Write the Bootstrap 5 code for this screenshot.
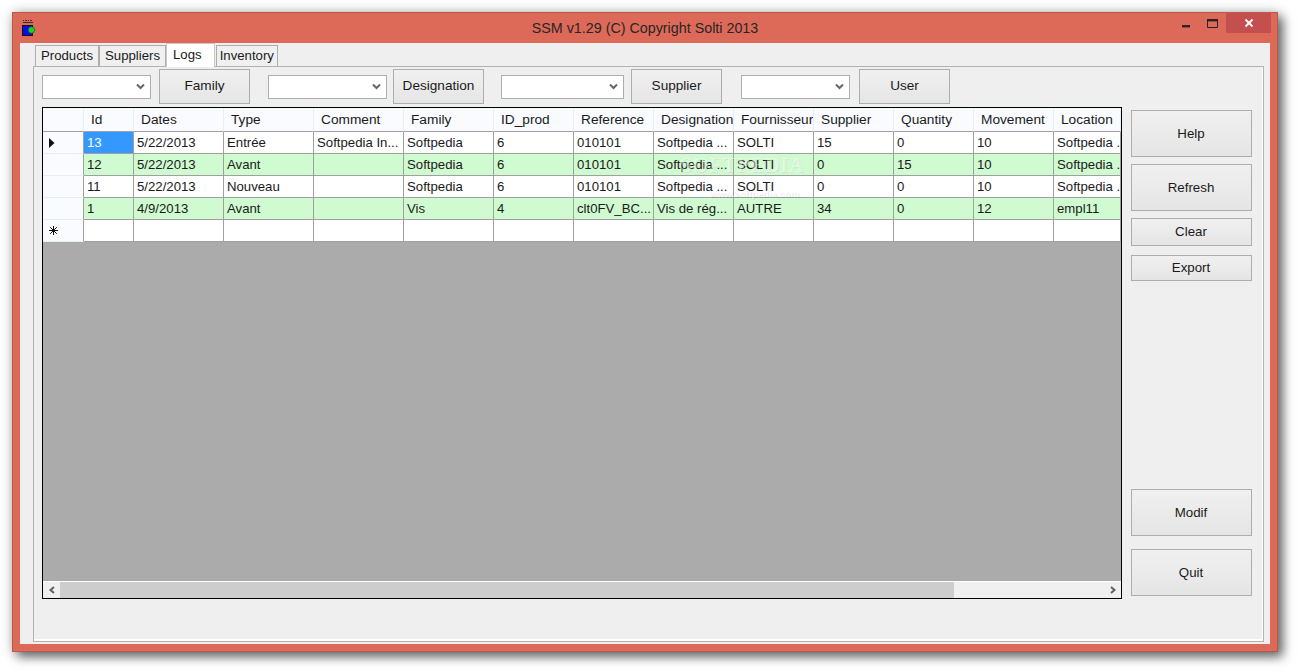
<!DOCTYPE html>
<html lang="en">
<head>
    <meta charset="UTF-8">
    <meta name="viewport" content="width=device-width, initial-scale=1.0">
    <title>SSM v1.29</title>
    <link href="https://cdn.jsdelivr.net/npm/bootstrap@5.3.0/dist/css/bootstrap.min.css" rel="stylesheet">
    <style>
        html, body { height: 100%; overflow: hidden; }
        body { background: #fff; color: #1a1a1a; font-family: "Liberation Sans", Arial, sans-serif; font-size: 13px; }
        .app-window {
            position: relative; width: 1266px; height: 640px; margin: 12px;
            background: #dd6a58; border: 1px solid #b85a4b;
            box-shadow: 5px 5px 10px rgba(0,0,0,.55), 0 0 12px rgba(0,0,0,.22);
        }
        .title-bar { height: 30px; padding-left: 8px; }
        .title-text { font-size: 14.3px; color: #262626; line-height: 30px; padding-right: 23px; }
        .win-controls { position: absolute; top: 0; right: 6px; height: 20px; }
        .win-btn { width: 26px; height: 20px; }
        .win-close { width: 45px; background: #c44f4f; margin-left: 1px; }
        .client-area { height: 601px; margin: 0 7px; background: #efefef; padding: 0 6px 2px 13px; }

        .nav-tabs.ssm-tabs { height: 23px; padding-left: 2px; border: 0; gap: 0; flex-wrap: nowrap; }
        .ssm-tabs .nav-link {
            height: 21px; margin: 2px 0 0; padding: 0 5px; line-height: 20px; font-size: 13.2px; color: #1a1a1a;
            background: #f0f0f0; border: 1px solid #adadad; border-bottom: 0; border-radius: 0;
        }
        .ssm-tabs .nav-link.active { height: 24px; margin: 0 1px -1px 0; line-height: 21px; padding: 0 12px 0 6px; background: #fff; border-color: #c8c8c8; position: relative; z-index: 1; color: #1a1a1a; }
        .ssm-tabs .nav-link.tab-tight { padding: 0 3px; }
        .tab-panel { height: 576px; background: #efefef; border: 1px solid #b2b2b2; box-shadow: inset -1px -2px 0 #fff; padding: 2px 0 0 8px; }

        .tool-row { height: 35px; }
        .form-select.tool-select {
            height: 24px; min-height: 0; padding: 0 18px 0 4px; border: 1px solid #adadad; border-radius: 0; background-color: #fff; font-size: 13px;
            background-position: right 4px center; background-size: 11px 9px;
            background-image: url("data:image/svg+xml,%3csvg xmlns='http://www.w3.org/2000/svg' viewBox='0 0 11 9'%3e%3cpath fill='none' stroke='%23666' stroke-width='2' d='M2 2.5l3.5 3.5L9 2.5'/%3e%3c/svg%3e");
        }
        .ssm-btn {
            border: 1px solid #adadad; border-radius: 0; padding: 0; color: #1a1a1a; font-size: 13.6px;
            background: linear-gradient(#f0f0f0, #e5e5e5);
        }
        .tool-btn { width: 91px; height: 35px; }
        .w-109 { width: 109px; } .w-119 { width: 119px; } .w-123 { width: 123px; }
        .after-8 { margin-right: 8px; } .after-18 { margin-right: 18px; } .after-6 { margin-right: 6px; }
        .after-17 { margin-right: 17px; } .after-7 { margin-right: 7px; } .after-19 { margin-right: 19px; } .after-9 { margin-right: 9px; }

        .main-row { margin-top: 3px; gap: 9px; }
        .data-grid { position: relative; width: 1080px; height: 492px; background: #ababab; border: 1px solid #000; overflow: hidden; }
        .log-table.table { width: 1078px; max-width: none; table-layout: fixed; margin: 0; border-collapse: separate; border-spacing: 0; font-size: 13.2px; --bs-table-color: #1a1a1a; }
        .log-table>*>tr>* { padding: 1px 3px 0; height: 22px; line-height: 20px; white-space: nowrap; overflow: hidden; background: #fff; border: 0; border-right: 1px solid #a0a0a0; border-bottom: 1px solid #a0a0a0; vertical-align: middle; font-weight: 400; color: #1a1a1a; }
        .log-table>thead>tr>th { height: 24px; padding: 0 0 0 7px; font-size: 13.7px; background: #f9fbff; border-right: 1px solid #e6eefa; border-bottom: 1px solid #a0a0a0; }
        .log-table>tbody>tr>th { padding: 0; background: #f9fbff; border-right: 1px solid #a0a0a0; border-bottom: 1px solid #e6eefa; text-align: left; }
        .log-table>tbody>tr.row-green>td { background: #d0fad0; }
        .log-table>tbody>tr>td.cell-selected { background: #3399ff; color: #fff; }
        .row-mark { display: block; margin-left: 6px; }

        .h-scroll { position: absolute; left: 0; right: 0; bottom: 0; height: 17px; background: #f0f0f0; border-top: 1px solid #fff; }
        .scroll-arrow { width: 17px; }
        .scroll-thumb { width: 894px; background: #cdcdcd; }

        .side-col { width: 121px; height: 486px; margin-top: 3px; }
        .h-47 { height: 47px; } .h-28 { height: 28px; } .h-26 { height: 26px; }
        .side-btn { font-size: 13.3px; width: 100%; padding-right: 1px; }
        .below-7 { margin-bottom: 7px; } .below-9 { margin-bottom: 9px; } .below-13 { margin-bottom: 13px; }

        .wm-big, .wm-small { position: absolute; color: rgba(255,255,255,.45); text-shadow: 1px 1px 0 rgba(0,0,0,.06); pointer-events: none; white-space: nowrap; }
        .wm-big { left: 637px; top: 45px; font: 700 21px "Liberation Serif", serif; letter-spacing: .5px; }
        .wm-small { left: 667px; top: 80px; font: 700 9.5px "Liberation Sans", sans-serif; text-shadow: 1px 1px 0 rgba(0,0,0,.1); }
    </style>
</head>
<body>
<div class="app-window">
    <div class="title-bar d-flex">
        <svg width="15" height="20" viewBox="0 0 15 20" class="mt-1 flex-shrink-0">
            <path d="M2 3.5h1M4 3.5h2M7 3.5h1M9 3.5h2M2 5.5h10" stroke="#333" stroke-width="1" fill="none"/>
            <rect x="1.5" y="8.5" width="10" height="10" fill="#0a0ae6" stroke="#111"/>
            <circle cx="10.5" cy="13" r="3.2" fill="#18d030" stroke="#116611" stroke-width=".7"/>
        </svg>
        <div class="title-text text-center flex-grow-1">SSM v1.29 (C) Copyright Solti 2013</div>
    </div>
    <div class="win-controls d-flex">
        <div class="win-btn d-flex align-items-center justify-content-center">
            <svg width="10" height="10" viewBox="0 0 10 10"><rect x="1" y="7" width="8" height="2.4" fill="#262626"/></svg>
        </div>
        <div class="win-btn d-flex align-items-center justify-content-center">
            <svg width="11" height="10" viewBox="0 0 11 10"><path d="M.5 1.5h10v8H.5z" fill="none" stroke="#262626"/><rect x="0" y="1" width="11" height="2.4" fill="#262626"/></svg>
        </div>
        <div class="win-btn win-close d-flex align-items-center justify-content-center">
            <svg width="10" height="10" viewBox="0 0 10 10"><path d="M1.5 1.5l7 7M8.5 1.5l-7 7" stroke="#fff" stroke-width="1.8"/></svg>
        </div>
    </div>

    <div class="client-area">
        <ul class="nav nav-tabs ssm-tabs">
            <li class="nav-item"><a class="nav-link" href="#">Products</a></li>
            <li class="nav-item"><a class="nav-link" href="#">Suppliers</a></li>
            <li class="nav-item"><a class="nav-link active" href="#">Logs</a></li>
            <li class="nav-item"><a class="nav-link tab-tight" href="#">Inventory</a></li>
        </ul>
        <div class="tab-panel">
            <div class="tool-row d-flex align-items-center">
                <select class="form-select tool-select w-109 after-8"></select>
                <button class="btn ssm-btn tool-btn after-18">Family</button>
                <select class="form-select tool-select w-119 after-6"></select>
                <button class="btn ssm-btn tool-btn after-17">Designation</button>
                <select class="form-select tool-select w-123 after-7"></select>
                <button class="btn ssm-btn tool-btn after-19">Supplier</button>
                <select class="form-select tool-select w-109 after-9"></select>
                <button class="btn ssm-btn tool-btn">User</button>
            </div>
            <div class="main-row d-flex">
                <div class="data-grid">
                    <table class="table log-table">
                        <colgroup>
                            <col width="41"><col width="50"><col width="90"><col width="90"><col width="90"><col width="90"><col width="80"><col width="80"><col width="80"><col width="80"><col width="80"><col width="80"><col width="80"><col width="67">
                        </colgroup>
                        <thead>
                            <tr><th></th><th>Id</th><th>Dates</th><th>Type</th><th>Comment</th><th>Family</th><th>ID_prod</th><th>Reference</th><th>Designation</th><th>Fournisseur</th><th>Supplier</th><th>Quantity</th><th>Movement</th><th>Location</th></tr>
                        </thead>
                        <tbody>
                            <tr>
                                <th><svg class="row-mark" width="6" height="10" viewBox="0 0 6 10"><path d="M0 0l5.5 5L0 10z" fill="#111"/></svg></th>
                                <td class="cell-selected">13</td><td>5/22/2013</td><td>Entrée</td><td>Softpedia In...</td><td>Softpedia</td><td>6</td><td>010101</td><td>Softpedia ...</td><td>SOLTI</td><td>15</td><td>0</td><td>10</td><td>Softpedia ...</td>
                            </tr>
                            <tr class="row-green">
                                <th></th><td>12</td><td>5/22/2013</td><td>Avant</td><td></td><td>Softpedia</td><td>6</td><td>010101</td><td>Softpedia ...</td><td>SOLTI</td><td>0</td><td>15</td><td>10</td><td>Softpedia ...</td>
                            </tr>
                            <tr>
                                <th></th><td>11</td><td>5/22/2013</td><td>Nouveau</td><td></td><td>Softpedia</td><td>6</td><td>010101</td><td>Softpedia ...</td><td>SOLTI</td><td>0</td><td>0</td><td>10</td><td>Softpedia ...</td>
                            </tr>
                            <tr class="row-green">
                                <th></th><td>1</td><td>4/9/2013</td><td>Avant</td><td></td><td>Vis</td><td>4</td><td>clt0FV_BC...</td><td>Vis de rég...</td><td>AUTRE</td><td>34</td><td>0</td><td>12</td><td>empl11</td>
                            </tr>
                            <tr>
                                <th><svg class="row-mark" width="9" height="9" viewBox="0 0 9 9"><path d="M4.5 0v9M0 4.5h9M1.2 1.2l6.6 6.6M7.8 1.2L1.2 7.8" stroke="#111" stroke-width="1" fill="none"/></svg></th>
                                <td></td><td></td><td></td><td></td><td></td><td></td><td></td><td></td><td></td><td></td><td></td><td></td><td></td>
                            </tr>
                        </tbody>
                    </table>
                    <div class="wm-big">SOFTPEDIA</div>
                    <div class="wm-small">www.softpedia.com</div>
                    <div class="h-scroll d-flex">
                        <div class="scroll-arrow d-flex align-items-center justify-content-center">
                            <svg width="8" height="8" viewBox="0 0 8 8"><path d="M6 1L2.5 4 6 7" fill="none" stroke="#606060" stroke-width="2"/></svg>
                        </div>
                        <div class="scroll-thumb"></div>
                        <div class="scroll-arrow d-flex align-items-center justify-content-center ms-auto">
                            <svg width="8" height="8" viewBox="0 0 8 8"><path d="M2 1l3.5 3L2 7" fill="none" stroke="#606060" stroke-width="2"/></svg>
                        </div>
                    </div>
                </div>
                <div class="side-col d-flex flex-column">
                    <button class="btn ssm-btn side-btn h-47 below-7">Help</button>
                    <button class="btn ssm-btn side-btn h-47 below-7">Refresh</button>
                    <button class="btn ssm-btn side-btn h-28 below-9">Clear</button>
                    <button class="btn ssm-btn side-btn h-26">Export</button>
                    <button class="btn ssm-btn side-btn h-47 mt-auto below-13">Modif</button>
                    <button class="btn ssm-btn side-btn h-47">Quit</button>
                </div>
            </div>
        </div>
    </div>
</div>
<script src="https://cdn.jsdelivr.net/npm/bootstrap@5.3.0/dist/js/bootstrap.bundle.min.js"></script>
</body>
</html>
